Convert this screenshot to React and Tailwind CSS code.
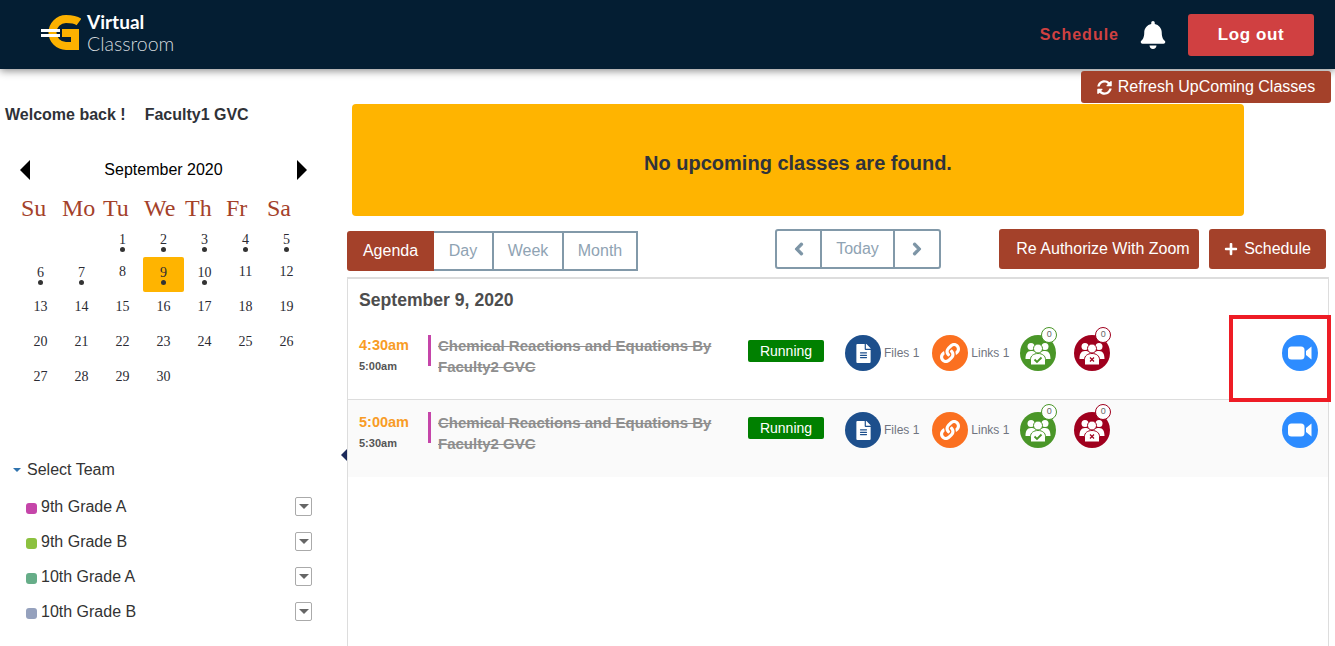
import React from "react";
import {
  FaBell,
  FaChevronLeft,
  FaChevronRight,
  FaFileAlt,
  FaLink,
  FaPlus,
  FaSyncAlt,
} from "react-icons/fa";

const dayNames = ["Su", "Mo", "Tu", "We", "Th", "Fr", "Sa"];
const weeks = [
  [null, null, 1, 2, 3, 4, 5],
  [6, 7, 8, 9, 10, 11, 12],
  [13, 14, 15, 16, 17, 18, 19],
  [20, 21, 22, 23, 24, 25, 26],
  [27, 28, 29, 30, null, null, null],
];
const busyDays = [1, 2, 3, 4, 5, 6, 7, 9, 10];

const teams = [
  { name: "9th Grade A", color: "bg-[#c545a9]" },
  { name: "9th Grade B", color: "bg-[#8cc13f]" },
  { name: "10th Grade A", color: "bg-[#66ad88]" },
  { name: "10th Grade B", color: "bg-[#95a1bd]" },
];

const classes = [
  { start: "4:30am", end: "5:00am", bg: "bg-white" },
  { start: "5:00am", end: "5:30am", bg: "bg-[#fafafa]" },
];

function Logo() {
  return (
    <div className="-mt-[5px] flex items-center">
      <svg width="40" height="36" viewBox="0 0 40 36" className="mr-[6px]">
        <path d="M38 8 C34 5 30 5 25 5 A13.500 13.500 0 0 0 25 32 H34 V19 H21" fill="none" stroke="#fcb100" strokeWidth="8" />
        <rect x="0" y="15" width="19" height="3" fill="#fff" />
        <rect x="0" y="20" width="19" height="3" fill="#fff" />
      </svg>
      <div className="mt-[1px] flex flex-col gap-[1px] font-['Lato',sans-serif]">
        <div className="text-[19px] leading-[20px] font-bold text-white">Virtual</div>
        <div className="text-[19.500px] leading-[21px] font-light text-[#d3dade]">Classroom</div>
      </div>
    </div>
  );
}

function Header() {
  return (
    <header className="flex h-[69px] items-center justify-between bg-[#041e33] pl-[41px] pr-[21px] shadow-[0_2px_8px_rgba(0,0,0,0.45)]">
      <Logo />
      <div className="flex items-center">
        <span className="text-[16px] font-bold tracking-[1px] text-[#d04141]">Schedule</span>
        <FaBell className="ml-[20px] text-[28px] text-white" />
        <button className="ml-[21px] h-[42px] w-[126px] rounded-[3px] bg-[#d04041] text-[17px] font-bold tracking-[0.6px] text-white">
          Log out
        </button>
      </div>
    </header>
  );
}

function Calendar() {
  return (
    <div className="pl-[20px]">
      <div className="flex h-[22px] w-[287px] items-center justify-between pt-[2px]">
        <span className="h-0 w-0 border-y-[10px] border-r-[10px] border-y-transparent border-r-black" />
        <span className="text-[16px] text-black">September 2020</span>
        <span className="h-0 w-0 border-y-[10px] border-l-[10px] border-y-transparent border-l-black" />
      </div>
      <div className="mt-[13px] grid w-[287px] grid-cols-7 font-['Liberation_Serif',serif] text-[24px] leading-[30px] text-[#a4412a]">
        {dayNames.map((d) => (
          <div key={d} className="pl-px">{d}</div>
        ))}
      </div>
      <div className="mt-[1px] grid w-[287px] grid-cols-7 grid-rows-[33px_35px_35px_35px_35px] font-['Liberation_Serif',serif] text-[14px] leading-[16px] text-[#2b2b33]">
        {weeks.flat().map((d, i) => (
          <div
            key={i}
            className={`flex flex-col items-center ${busyDays.includes(d) ? "pt-[8px]" : "pt-[7px]"} ${d === 9 ? "rounded-[2px] bg-[#ffb400]" : ""}`}
          >
            <span>{d}</span>
            {busyDays.includes(d) && <span className="-mt-px h-[5px] w-[5px] rounded-full bg-[#333]" />}
          </div>
        ))}
      </div>
    </div>
  );
}

function TeamList() {
  return (
    <div className="mt-[61px] pl-[13px] text-[16px] text-[#333]">
      <div className="flex h-[24px] items-center">
        <span className="h-0 w-0 border-x-[4px] border-t-[4px] border-x-transparent border-t-[#2f73ae]" />
        <span className="ml-[6px]">Select Team</span>
      </div>
      <div className="mt-[7px]">
        {teams.map((t) => (
          <div key={t.name} className="flex h-[35px] w-[299px] items-center pl-[13px]">
            <span className={`mt-[4px] h-[11px] w-[11px] rounded-[3px] ${t.color}`} />
            <span className="ml-[4px] flex-1">{t.name}</span>
            <span className="flex h-[19px] w-[17px] items-center justify-center rounded-[2px] border border-[#aaa] bg-white">
              <span className="h-0 w-0 border-x-[5px] border-t-[5px] border-x-transparent border-t-[#666]" />
            </span>
          </div>
        ))}
      </div>
    </div>
  );
}

function Sidebar() {
  return (
    <aside className="w-[347px] shrink-0">
      <div className="mt-[34px] h-[22px] pl-[5px] text-[16px] font-bold text-[#2f3238]">
        <span>Welcome back !</span>
        <span className="ml-[19px]">Faculty1 GVC</span>
      </div>
      <div className="mt-[33px]">
        <Calendar />
      </div>
      <TeamList />
    </aside>
  );
}

function Toolbar() {
  return (
    <div className="flex h-[40px] items-start">
      <div className="flex h-[40px] text-[16px] text-[#8fa3b3]">
        <button className="w-[87px] rounded-l-[3px] bg-[#a4412a] text-white">Agenda</button>
        <button className="w-[58px] border-y-[2px] border-[#8299a9]">Day</button>
        <button className="w-[70px] border-y-[2px] border-l-[2px] border-[#8299a9]">Week</button>
        <button className="w-[76px] border-2 border-[#8299a9]">Month</button>
      </div>
      <div className="-mt-[2px] ml-[137px] flex h-[40px] rounded-[3px] border-2 border-[#8299a9] text-[16px] text-[#8fa3b3]">
        <span className="flex w-[45px] items-center justify-center border-r-2 border-[#8299a9] text-[#7d95a6]">
          <FaChevronLeft className="stroke-current stroke-[40] text-[14px]" />
        </span>
        <span className="flex w-[73px] items-center justify-center border-r-2 border-[#8299a9]">Today</span>
        <span className="flex w-[44px] items-center justify-center text-[#7d95a6]">
          <FaChevronRight className="stroke-current stroke-[40] text-[14px]" />
        </span>
      </div>
      <button className="-mt-[2px] ml-[58px] h-[40px] w-[200px] rounded-[3px] bg-[#a4412a] pl-[8px] text-[16px] text-white">
        Re Authorize With Zoom
      </button>
      <button className="-mt-[2px] ml-[10px] flex h-[40px] w-[117px] items-center justify-center rounded-[3px] bg-[#a4412a] text-[16px] text-white">
        <FaPlus className="mr-[6px] text-[14px]" />
        Schedule
      </button>
    </div>
  );
}

function GroupGlyph({ mark, color }) {
  return (
    <svg width="26" height="24" viewBox="0 0 26 24">
      <g fill="#fff">
        <circle cx="6" cy="5.500" r="3.500" />
        <circle cx="20" cy="5.500" r="3.500" />
        <path d="M0.500 18c0-5 1.500-8 5.500-8s5 2 7 2 3-2 7-2 5.500 3 5.500 8z" />
        <circle cx="13" cy="7.500" r="4.500" stroke={color} strokeWidth="1" />
        <path d="M5.500 24v-5.500c0-3.500 3-6 7.500-6s7.500 2.500 7.500 6v5.500z" stroke={color} strokeWidth="1" />
      </g>
      {mark === "check" ? (
        <path d="M9.500 18.500l2.500 2.500 4.500-4.500" fill="none" stroke={color} strokeWidth="1.800" />
      ) : (
        <path d="M11 16.500l4 4m0-4l-4 4" fill="none" stroke={color} strokeWidth="1.200" />
      )}
    </svg>
  );
}

function GroupBadge({ color, bg, border, mark }) {
  return (
    <div className={`relative flex h-[36px] w-[36px] items-center justify-center rounded-full ${bg}`}>
      <GroupGlyph mark={mark} color={color} />
      <span className={`absolute -top-[8px] left-[21px] flex h-[16px] w-[16px] items-center justify-center rounded-full border bg-white text-[9px] text-[#666] ${border}`}>
        0
      </span>
    </div>
  );
}

function ClassRow({ item, divider }) {
  return (
    <div className={`flex h-[77px] ${item.bg} ${divider ? "border-b border-[#ddd]" : ""}`}>
      <div className="mt-[13px] w-[80px] pl-[11px]">
        <div className="text-[14.500px] leading-[18px] font-bold text-[#f89c26]">{item.start}</div>
        <div className="mt-[5px] text-[11px] leading-[14px] font-bold text-[#555]">{item.end}</div>
      </div>
      <div className="mt-[12px] h-[31px] w-[3px] bg-[#c545a9]" />
      <div className="mt-[12px] ml-[7px] w-[310px] text-[15px] leading-[21px] font-bold text-[#8e8e8e] line-through">
        Chemical Reactions and Equations By Faculty2 GVC
      </div>
      <div className="mt-[17px]">
        <span className="flex h-[22px] w-[76px] items-center justify-center rounded-[2px] bg-[#008000] text-[14px] text-white">
          Running
        </span>
      </div>
      <div className="mt-[12px] ml-[21px] flex h-[36px] items-center text-[12px] text-[#6f7480]">
        <span className="flex h-[36px] w-[36px] items-center justify-center rounded-full bg-[#1d4f8c] text-white">
          <FaFileAlt className="text-[19px]" />
        </span>
        <span className="ml-[3px]">Files 1</span>
        <span className="ml-[13px] flex h-[36px] w-[36px] items-center justify-center rounded-full bg-[#fb7020] text-white">
          <FaLink className="text-[20px]" />
        </span>
        <span className="ml-[3px]">Links 1</span>
        <span className="ml-[11px]">
          <GroupBadge color="#4a9628" bg="bg-[#4a9628]" border="border-[#4a9628]" mark="check" />
        </span>
        <span className="ml-[18px]">
          <GroupBadge color="#a0001e" bg="bg-[#a0001e]" border="border-[#a0001e]" mark="cross" />
        </span>
      </div>
      <div className="mt-[12px] ml-auto mr-[10px] flex h-[36px] w-[36px] items-center justify-center rounded-full bg-[#2d8cff]">
        <svg width="24" height="14" viewBox="0 0 24 14">
          <rect x="0" y="0.500" width="16.500" height="13" rx="3.500" fill="#fff" />
          <path d="M18 5 L23.500 0.500 V13.500 L18 9 Z" fill="#fff" />
        </svg>
      </div>
    </div>
  );
}

export default function App() {
  return (
    <div className="relative h-[646px] w-[1335px] overflow-hidden bg-white font-['Liberation_Sans',Arial,sans-serif]">
      <Header />
      <div className="flex">
        <Sidebar />
        <main className="relative flex-1">
          <div className="mt-[2px] flex justify-end pr-[4px]">
            <button className="flex h-[32px] w-[250px] items-center justify-center rounded-[3px] bg-[#a4412a] text-[16px] text-white">
              <FaSyncAlt className="mr-[6px] text-[15px]" />
              Refresh UpComing Classes
            </button>
          </div>
          <div className="mt-px ml-[5px] flex h-[112px] w-[892px] items-center justify-center rounded-[4px] bg-[#ffb400] pt-[6px] text-[20px] font-bold text-[#30333b]">
            No upcoming classes are found.
          </div>
          <div className="mt-[15px]">
            <Toolbar />
          </div>
          <div className="mt-[6px] h-[400px] w-[982px] border-x border-t-2 border-[#ddd]">
            <div className="h-[44px] pt-[8px] pl-[11px] text-[17.600px] leading-[26px] font-bold text-[#4d4d4d]">
              September 9, 2020
            </div>
            <ClassRow item={classes[0]} divider />
            <ClassRow item={classes[1]} />
          </div>
          <span className="absolute left-[-6px] top-[380px] h-0 w-0 border-y-[6px] border-r-[6px] border-y-transparent border-r-[#1c2a5a]" />
        </main>
      </div>
      <div className="absolute left-[1229px] top-[315px] h-[87px] w-[102px] border-[4px] border-[#ee1c25]" />
    </div>
  );
}
